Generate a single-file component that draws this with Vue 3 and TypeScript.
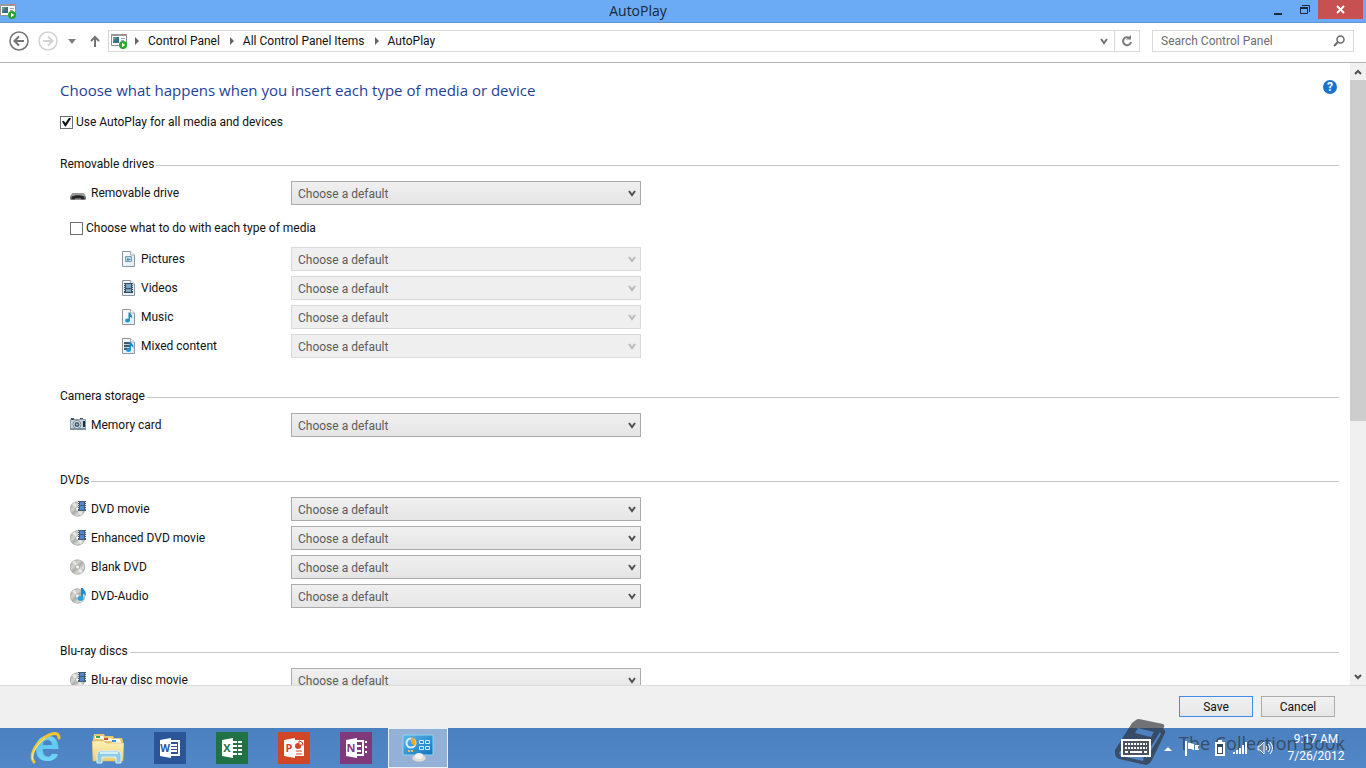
<script setup lang="ts">
import { ref, reactive } from 'vue'

interface MediaRow {
  id: string
  label: string
  icon: string
}

interface MediaGroup {
  title: string
  rows: MediaRow[]
  nested?: MediaRow[]
}

const groups: MediaGroup[] = [
  {
    title: 'Removable drives',
    rows: [{ id: 'removable', label: 'Removable drive', icon: 'drive' }],
    nested: [
      { id: 'pictures', label: 'Pictures', icon: 'picture' },
      { id: 'videos', label: 'Videos', icon: 'video' },
      { id: 'music', label: 'Music', icon: 'music' },
      { id: 'mixed', label: 'Mixed content', icon: 'mixed' },
    ],
  },
  { title: 'Camera storage', rows: [{ id: 'card', label: 'Memory card', icon: 'camera' }] },
  {
    title: 'DVDs',
    rows: [
      { id: 'dvd', label: 'DVD movie', icon: 'disc-film' },
      { id: 'edvd', label: 'Enhanced DVD movie', icon: 'disc-film' },
      { id: 'blank', label: 'Blank DVD', icon: 'disc' },
      { id: 'audio', label: 'DVD-Audio', icon: 'disc-note' },
    ],
  },
  {
    title: 'Blu-ray discs',
    rows: [{ id: 'bluray', label: 'Blu-ray disc movie', icon: 'disc-film' }],
  },
]

const crumbs = ['Control Panel', 'All Control Panel Items', 'AutoPlay']
const useAutoPlay = ref(true)
const perMedia = ref(false)
const search = ref('')
const choices = reactive<Record<string, string>>({})

const officeApps = [
  { name: 'Word', letter: 'W', cls: 'word' },
  { name: 'Excel', letter: 'X', cls: 'excel' },
  { name: 'PowerPoint', letter: 'P', cls: 'ppt' },
  { name: 'OneNote', letter: 'N', cls: 'onenote' },
]
</script>

<template>
  <div class="desktop">
    <svg class="defs" aria-hidden="true">
      <defs>
        <linearGradient id="g-disc" x1="0" y1="0" x2="1" y2="1">
          <stop offset="0" stop-color="#9c9c9c" />
          <stop offset=".35" stop-color="#d6d6d0" />
          <stop offset=".5" stop-color="#a9ada6" />
          <stop offset=".7" stop-color="#dcdcda" />
          <stop offset="1" stop-color="#828282" />
        </linearGradient>
        <linearGradient id="g-page" x1="0" y1="0" x2="1" y2="1">
          <stop offset="0" stop-color="#ffffff" />
          <stop offset="1" stop-color="#dcebf6" />
        </linearGradient>
        <linearGradient id="g-e" x1="0" y1="0" x2="0" y2="1">
          <stop offset="0" stop-color="#b5ecfc" />
          <stop offset=".5" stop-color="#5fc9f3" />
          <stop offset="1" stop-color="#7fe0fb" />
        </linearGradient>
        <linearGradient id="g-folder" x1="0" y1="0" x2="0" y2="1">
          <stop offset="0" stop-color="#fdf1b8" />
          <stop offset="1" stop-color="#efcf73" />
        </linearGradient>
        <linearGradient id="g-cp" x1="0" y1="0" x2="1" y2="1">
          <stop offset="0" stop-color="#5bb7ea" />
          <stop offset="1" stop-color="#1373bd" />
        </linearGradient>
        <symbol id="i-autoplay" viewBox="0 0 16 16">
          <path d="M.5 1.5h15v11H.5z" fill="#fff" stroke="#8f9396" />
          <path d="M0 1h16v2H0z" fill="#9a9b9d" />
          <path d="M10 1h2v1h-2zM13 1h2v1h-2z" fill="#d36b62" />
          <path d="M2 4h6v6H2z" fill="#3d6f83" />
          <path d="M2 4h4l-4 5z" fill="#649d91" />
          <path d="M10 5.5h4M10 7.5h3" stroke="#9ba4ab" />
          <circle cx="12" cy="12" r="4" fill="#28a52c" />
          <path d="M11 9.8v4.4l3.300-2.200z" fill="#fff" />
        </symbol>
        <symbol id="i-page" viewBox="0 0 16 16">
          <path d="M2.5 .5h8l4 3.500v11.500h-12z" fill="url(#g-page)" stroke="#8d969e" />
          <path d="M10.5 .5v3.500h4" fill="#fff" stroke="#a5adb4" />
        </symbol>
        <symbol id="i-picture" viewBox="2 0 16 16">
          <use href="#i-page" width="16" height="16" />
          <path d="M5.500 5.500h6v5h-6z" fill="#b8dcec" stroke="#7c9cac" />
          <path d="M7 7l4 1.500L7 10z" fill="#5591ae" />
        </symbol>
        <symbol id="i-video" viewBox="2 0 16 16">
          <use href="#i-page" width="16" height="16" />
          <path d="M4 3h9v10H4z" fill="#3a4d60" />
          <path d="M6 4h5v4H6zM6 9h5v3H6z" fill="#79a6c4" />
          <path d="M4 4h1v1H4zM4 6h1v1H4zM4 8h1v1H4zM4 10h1v1H4zM12 4h1v1h-1zM12 6h1v1h-1zM12 8h1v1h-1zM12 10h1v1h-1z" fill="#d3dce3" />
        </symbol>
        <symbol id="i-music" viewBox="2 0 16 16">
          <use href="#i-page" width="16" height="16" />
          <path d="M8.500 3.500H10c.5 2 3 2.500 2 6.500 0-1.500-1-2-2-2v4H8.500z" fill="#168bc8" />
          <ellipse cx="7.500" cy="11.500" rx="2.500" ry="2" fill="#1c99d4" />
        </symbol>
        <symbol id="i-mixed" viewBox="2 0 16 16">
          <use href="#i-page" width="16" height="16" />
          <path d="M4 4h7v8H4z" fill="#42596c" />
          <path d="M4 6.500h6M4 9.500h6" stroke="#b7d0e0" />
          <path d="M9.500 4H11c.5 2 3 2.500 2.500 6-.5-1-1.500-2-2.500-2v4H9.500z" fill="#168bc8" />
          <ellipse cx="8.500" cy="12" rx="2.500" ry="2" fill="#1c99d4" />
        </symbol>
        <symbol id="i-drive" viewBox="0 0 16 16">
          <path d="M2.500 8h11l2.500 4v2l-1 1H1l-1-1v-2z" fill="#777" />
          <path d="M2.500 8h11l2 3H.5z" fill="#999" />
          <path d="M2 12c1-2.500 11-2.500 12 0l.5 2h-13z" fill="#252525" />
          <path d="M5 14h6" stroke="#b4b4b4" />
        </symbol>
        <symbol id="i-camera" viewBox="0 0 16 16">
          <path d="M.5 2.500h15v10H.5z" fill="#c7d3dd" stroke="#8b9caa" />
          <path d="M0 11h16v2H0z" fill="#7f92a3" />
          <path d="M1 1h3v2H1zM10 1h3v1h-3z" fill="#42515e" />
          <path d="M13 4h2v6h-2z" fill="#1f2c37" />
          <circle cx="7" cy="7.500" r="4" fill="#eef4f8" stroke="#718494" />
          <circle cx="7" cy="7.500" r="2.500" fill="#3c5870" />
          <circle cx="7" cy="7.500" r="1" fill="#a4cbe0" />
        </symbol>
        <symbol id="i-disc" viewBox="0 0 16 16">
          <circle cx="7.500" cy="8" r="7.300" fill="url(#g-disc)" stroke="#989898" stroke-width=".6" />
          <path d="M7.500 8L2 3.500A7 7 0 0 1 5 1.500zM7.500 8l5.500 4.500a7 7 0 0 1-3 2z" fill="#f5f5f3" opacity=".7" />
          <circle cx="7.500" cy="8" r="2.200" fill="#e0e0e0" stroke="#a0a0a0" stroke-width=".6" />
          <circle cx="7.500" cy="8" r="1" fill="#fff" />
        </symbol>
        <symbol id="i-disc-film" viewBox="0 0 16 16">
          <use href="#i-disc" width="16" height="16" />
          <path d="M8 0h8v10H8z" fill="#465a72" />
          <path d="M10 1h4v3h-4zM10 5h4v4h-4z" fill="#4f86cf" />
          <path d="M8 1h1v1H8zM8 3h1v1H8zM8 5h1v1H8zM8 7h1v1H8zM15 1h1v1h-1zM15 3h1v1h-1zM15 5h1v1h-1zM15 7h1v1h-1z" fill="#dbe2e8" />
        </symbol>
        <symbol id="i-disc-note" viewBox="0 0 16 16">
          <use href="#i-disc" width="16" height="16" />
          <path d="M11 0h2c.5 2 4 3.500 2.500 8-.6-1.500-1.500-2.500-2.500-2.500V11h-2z" fill="#178ed0" />
          <ellipse cx="10.500" cy="10.500" rx="3" ry="2.400" fill="#28a3e0" />
        </symbol>
      </defs>
    </svg>

    <header class="titlebar">
      <svg class="icon16" aria-hidden="true"><use href="#i-autoplay" /></svg>
      <h1 class="title">AutoPlay</h1>
      <div class="controls">
        <button class="ctl min" aria-label="Minimize">
          <svg width="10" height="14"><path d="M1 11h8" stroke="#1b2a3a" stroke-width="2" /></svg>
        </button>
        <button class="ctl restore" aria-label="Restore">
          <svg width="12" height="12">
            <path d="M3 1.500h7.500V8" fill="none" stroke="#1b2a3a" />
            <path d="M1.500 4.500h7v5h-7z" fill="none" stroke="#1b2a3a" />
            <path d="M1 4h8" stroke="#1b2a3a" stroke-width="2" />
          </svg>
        </button>
        <button class="ctl close" aria-label="Close">
          <svg width="9" height="9"><path d="M1 1l7 7M8 1l-7 7" stroke="#fff" stroke-width="2" /></svg>
        </button>
      </div>
    </header>

    <nav class="navbar" aria-label="Navigation">
      <button class="nav back" aria-label="Back">
        <svg width="20" height="20">
          <circle cx="10" cy="10" r="9" fill="none" stroke="#747474" stroke-width="1.500" />
          <path d="M15 10H6M10 5.500L5.500 10l4.500 4.500" fill="none" stroke="#747474" stroke-width="2" />
        </svg>
      </button>
      <button class="nav forward" aria-label="Forward">
        <svg width="20" height="20">
          <circle cx="10" cy="10" r="9" fill="none" stroke="#d2d2d2" stroke-width="1.500" />
          <path d="M5 10h9M10 5.500l4.500 4.500-4.500 4.500" fill="none" stroke="#d2d2d2" stroke-width="2" />
        </svg>
      </button>
      <button class="nav recent" aria-label="Recent locations">
        <svg width="8" height="5"><path d="M0 0h8L4 5z" fill="#808080" /></svg>
      </button>
      <button class="nav up" aria-label="Up">
        <svg width="10" height="12"><path d="M5 12V2M1 6l4-4 4 4" fill="none" stroke="#747474" stroke-width="2" /></svg>
      </button>
      <div class="address">
        <svg class="icon16" aria-hidden="true"><use href="#i-autoplay" /></svg>
        <ol class="crumbs">
          <li v-for="c in crumbs" :key="c">
            <svg width="4" height="8" aria-hidden="true"><path d="M0 0l4 4-4 4z" fill="#666" /></svg>
            <a href="#">{{ c }}</a>
          </li>
        </ol>
        <button class="drop" aria-label="Previous locations">
          <svg width="8" height="7"><path d="M1 1l3 4 3-4" fill="none" stroke="#707070" stroke-width="2" /></svg>
        </button>
        <button class="refresh" aria-label="Refresh">
          <svg width="12" height="12">
            <path d="M8.500 3A4 4 0 1 0 10 7" fill="none" stroke="#7c7c7c" stroke-width="2" />
            <path d="M5 4.500h5V0z" fill="#7c7c7c" />
          </svg>
        </button>
      </div>
      <label class="search">
        <input v-model="search" type="text" placeholder="Search Control Panel" aria-label="Search Control Panel" />
        <svg width="12" height="12" aria-hidden="true">
          <circle cx="7.500" cy="4.500" r="3.500" fill="none" stroke="#6a6a6a" stroke-width="1.500" />
          <path d="M5 7l-4 4" stroke="#6a6a6a" stroke-width="2" />
        </svg>
      </label>
    </nav>

    <div class="body">
      <main class="content">
        <div class="head">
          <h2>Choose what happens when you insert each type of media or device</h2>
          <button class="help" aria-label="Help">?</button>
        </div>
        <label class="check">
          <input v-model="useAutoPlay" type="checkbox" />
          <span>Use AutoPlay for all media and devices</span>
        </label>

        <section v-for="g in groups" :key="g.title" class="group" :class="{ compact: g.nested }">
          <h3><span>{{ g.title }}</span></h3>
          <div class="rows">
            <div v-for="r in g.rows" :key="r.id" class="row">
              <svg class="icon16" aria-hidden="true"><use :href="'#i-' + r.icon" /></svg>
              <label :for="r.id">{{ r.label }}</label>
              <div class="select">
                <select :id="r.id" v-model="choices[r.id]">
                  <option :value="undefined">Choose a default</option>
                </select>
                <svg width="8" height="7" aria-hidden="true"><path d="M1 1l3 4 3-4" fill="none" stroke="#505050" stroke-width="2" /></svg>
              </div>
            </div>
          </div>
          <template v-if="g.nested">
            <label class="check inner">
              <input v-model="perMedia" type="checkbox" />
              <span>Choose what to do with each type of media</span>
            </label>
            <div class="rows nested">
              <div v-for="r in g.nested" :key="r.id" class="row">
                <svg class="icon16" aria-hidden="true"><use :href="'#i-' + r.icon" /></svg>
                <label :for="r.id">{{ r.label }}</label>
                <div class="select">
                  <select :id="r.id" v-model="choices[r.id]" :disabled="!perMedia">
                    <option :value="undefined">Choose a default</option>
                  </select>
                  <svg width="8" height="7" aria-hidden="true"><path d="M1 1l3 4 3-4" fill="none" stroke="#b8b8b8" stroke-width="2" /></svg>
                </div>
              </div>
            </div>
          </template>
        </section>
      </main>
      <div class="scrollbar">
        <button aria-label="Scroll up">
          <svg width="8" height="6"><path d="M1 5l3-3 3 3" fill="none" stroke="#505050" stroke-width="2" /></svg>
        </button>
        <div class="track"><div class="thumb"></div></div>
        <button aria-label="Scroll down">
          <svg width="8" height="6"><path d="M1 1l3 3 3-3" fill="none" stroke="#505050" stroke-width="2" /></svg>
        </button>
      </div>
    </div>

    <footer class="actions">
      <button class="btn primary">Save</button>
      <button class="btn">Cancel</button>
    </footer>

    <div class="taskbar">
      <div class="apps">
        <button class="app" aria-label="Internet Explorer">
          <svg width="32" height="34" viewBox="0 0 32 34">
            <text x="17" y="30" class="ie">e</text>
            <path d="M4 31C-1 26 5 13 14 7c7-5 15-7 15 0" fill="none" stroke="#f2c52c" stroke-width="3" stroke-linecap="round" />
            <path d="M3 29c-3-5 4-16 12-22" fill="none" stroke="#fff0a0" stroke-width="1" />
          </svg>
        </button>
        <button class="app" aria-label="File Explorer">
          <svg width="32" height="32" viewBox="0 0 32 32">
            <path d="M1 7l1-5h10l1 2h8l1 2h8l1 3v19H1z" fill="#e8c86c" />
            <path d="M3 4h8l2 3H3z" fill="#fbfbf2" />
            <path d="M10 6h9l2 3h-9z" fill="#fdfdf8" />
            <path d="M19 7h9l1 4h-9z" fill="#fdfdf8" />
            <path d="M4 4h4v2H4z" fill="#35a853" />
            <path d="M12 6h4v2h-4z" fill="#d8442d" />
            <path d="M20 8h4v2h-4z" fill="#348fd4" />
            <path d="M0 9h12l2 2h18l-1 18H1z" fill="url(#g-folder)" stroke="#d7b860" stroke-width=".6" />
            <path d="M5 31V22l2-3h20l2 3v9h-5v-6H10v6z" fill="#8fcbe7" stroke="#d8f2fc" />
            <path d="M8 21h18" stroke="#e7f8ff" stroke-width="1.500" />
          </svg>
        </button>
        <button v-for="a in officeApps" :key="a.name" class="app" :aria-label="a.name">
          <span class="tile" :class="a.cls">
            <svg width="32" height="32" viewBox="0 0 32 32">
              <path v-if="a.letter === 'W'" d="M17 9h8v14h-8M17 13h6M17 16h6M17 19h6" fill="none" stroke="#fff" stroke-width="2" />
              <path v-else-if="a.letter === 'X'" d="M17 10h4M22 10h4M17 14h4M22 14h4M17 18h4M22 18h4M17 22h4M22 22h4" stroke="#fff" stroke-width="2" />
              <g v-else-if="a.letter === 'P'">
                <path d="M17 8h9v16h-9" fill="#fff" />
                <path d="M18 19h6M18 22h6" stroke="#d24625" />
                <circle cx="20" cy="14" r="3" fill="#d24625" />
                <path d="M21 9v4h4a4 4 0 0 0-4-4z" fill="#fff" stroke="#d24625" />
              </g>
              <path v-else d="M17 9h6v14h-6M17 14h4M17 19h4M25 10h2M25 15h2M25 20h2" fill="none" stroke="#fff" stroke-width="2" />
              <path d="M6 8l11-2v20L6 24z" fill="#fff" />
              <text x="11" y="20" class="letter">{{ a.letter }}</text>
            </svg>
          </span>
        </button>
        <button class="app active" aria-label="Control Panel">
          <svg width="32" height="30" viewBox="0 0 32 30">
            <path d="M1 2h30v20H1z" fill="url(#g-cp)" stroke="#8fd3f5" />
            <circle cx="9" cy="10" r="4.500" fill="none" stroke="#d9f0fb" stroke-width="2" />
            <path d="M9 10V4a6 6 0 0 1 4 9z" fill="#f5a52c" />
            <path d="M17.500 7.500h4v3h-4zM23.500 7.500h4v3h-4zM17.500 13.500h4v3h-4zM23.500 13.500h4v3h-4z" fill="#2f86c9" stroke="#d5effb" />
            <path d="M6 18h2M9 18h2" stroke="#f7c04d" stroke-width="2" />
            <ellipse cx="17" cy="25" rx="7" ry="4" fill="#dcdcdc" stroke="#a9a9a9" stroke-width=".6" />
            <ellipse cx="17" cy="23" rx="4" ry="3" fill="#f2f2f2" />
          </svg>
        </button>
      </div>

      <div class="watermark" aria-hidden="true">
        <svg width="52" height="48" viewBox="0 0 52 48">
          <path
            fill-rule="evenodd"
            d="M21 1q1-1 3-1l24 5q2 1 1 3l-1 2q3 1 2 4L37 41q-2 4-6 5L4 40q-5-2-4-9L17 4zM23 9l-3 5 16 4 3-5zM45 13L32 34l-1 6 15-25zM5 32q-2 3 1 5l22 5 1-5z"
            fill="#2c3036"
          />
        </svg>
        <span>The Collection Book</span>
      </div>

      <div class="tray">
        <button class="keys" aria-label="Touch keyboard">
          <svg width="30" height="18">
            <path d="M1 1h28v16H1z" fill="#4b535e" stroke="#fff" stroke-width="2" />
            <path d="M4 5h22M4 9h22" stroke="#fff" stroke-width="2" stroke-dasharray="2 1" />
            <path d="M4 13h3M9 13h12M23 13h3" stroke="#fff" stroke-width="2" />
          </svg>
        </button>
        <button class="more" aria-label="Show hidden icons">
          <svg width="8" height="5"><path d="M0 5l4-4 4 4z" fill="#fff" /></svg>
        </button>
        <button class="flag" aria-label="Action Center">
          <svg width="16" height="16">
            <path d="M2 1v15" stroke="#fff" stroke-width="2" />
            <path d="M4 3c3-1 4 1 6 1v6c-2 0-3-2-6-1zM11 5h4l-1 2 1 3h-4z" fill="#fff" />
          </svg>
        </button>
        <button class="battery" aria-label="Battery">
          <svg width="10" height="16">
            <path d="M3 0h4v2H3z" fill="#fff" />
            <path d="M1 3h8v12H1z" fill="#33485e" stroke="#fff" stroke-width="2" />
            <path d="M3 7h4v6H3z" fill="#fff" />
          </svg>
        </button>
        <button class="signal" aria-label="Network">
          <svg width="16" height="12"><path d="M1 10v2M4 8v4M7 6v6M10 3v9M13 0v12" stroke="#fff" stroke-width="2" /></svg>
        </button>
        <button class="volume" aria-label="Volume">
          <svg width="16" height="14">
            <path d="M1 5h2l4-4v12L3 9H1z" fill="#71869e" stroke="#fff" />
            <path d="M9 5q2 2 0 4M11 3q4 4 0 8M13 1q5 6 0 12" fill="none" stroke="#fff" />
          </svg>
        </button>
        <time class="clock"><span>9:17 AM</span><span>7/26/2012</span></time>
      </div>
    </div>
  </div>
</template>

<style>
body {
  margin: 0;
}
</style>

<style scoped>
.desktop {
  display: flex;
  flex-direction: column;
  height: 100vh;
  background: #fff;
  color: #111;
  font: 12px/16px Roboto, "Open Sans", sans-serif;
  overflow: hidden;
}
.defs {
  position: absolute;
  width: 0;
  height: 0;
}
button {
  padding: 0;
  border: 0;
  background: none;
  color: inherit;
  font: inherit;
}
svg {
  display: block;
  flex: none;
}
.icon16 {
  width: 16px;
  height: 16px;
}

.titlebar {
  display: flex;
  align-items: center;
  height: 23px;
  flex: none;
  box-sizing: border-box;
  background: #6babf5;
  border-bottom: 1px solid #5e96d6;
}
.title {
  flex: 1;
  margin: 0;
  text-align: center;
  font: 400 14px/20px "Open Sans", sans-serif;
  color: #17273b;
}
.controls {
  display: flex;
  align-self: flex-start;
  padding-right: 3px;
}
.ctl {
  display: flex;
  align-items: center;
  justify-content: center;
  height: 19px;
}
.min {
  width: 36px;
}
.restore {
  width: 18px;
}
.close {
  width: 45px;
  margin-left: 4px;
  background: #c75050;
}

.navbar {
  display: flex;
  align-items: center;
  flex: none;
  height: 40px;
  box-sizing: border-box;
  padding: 0 12px 3px 9px;
  border-bottom: 1px solid #b4b4b4;
}
.forward {
  margin-left: 9px;
}
.recent {
  margin-left: 10px;
}
.up {
  margin-left: 14px;
}
.address {
  display: flex;
  align-items: center;
  flex: 1;
  height: 22px;
  margin-left: 8px;
  padding-left: 2px;
  box-sizing: border-box;
  border: 1px solid #d9d9d9;
}
.crumbs {
  display: flex;
  flex: 1;
  gap: 10px;
  margin: 0;
  padding: 0 0 0 8px;
  list-style: none;
}
.crumbs li {
  display: flex;
  align-items: center;
  gap: 9px;
}
.crumbs a {
  color: #111;
  text-decoration: none;
}
.drop {
  width: 18px;
  padding-left: 4px;
}
.refresh {
  display: flex;
  align-items: center;
  justify-content: center;
  width: 25px;
  height: 20px;
  border-left: 1px solid #d9d9d9;
}
.search {
  display: flex;
  align-items: center;
  width: 202px;
  height: 22px;
  margin-left: 12px;
  padding: 0 8px;
  box-sizing: border-box;
  border: 1px solid #d9d9d9;
}
.search input {
  flex: 1;
  min-width: 0;
  padding: 0;
  border: 0;
  outline: 0;
  background: none;
  font: inherit;
}
.search input::placeholder {
  color: #6d6d6d;
  opacity: 1;
}

.body {
  display: flex;
  flex: 1;
  min-height: 0;
}
.content {
  flex: 1;
  padding: 15px 11px 0 60px;
  overflow: hidden;
}
.head {
  display: flex;
  justify-content: space-between;
  align-items: flex-start;
}
h2 {
  margin: 0;
  color: #1f3f98;
  font: 400 15px/24px "Open Sans", sans-serif;
}
.help {
  width: 14px;
  height: 14px;
  margin: 2px 2px 0 0;
  border-radius: 50%;
  background: #1874cd;
  color: #fff;
  font-weight: 700;
  line-height: 14px;
}
.check {
  display: flex;
  align-items: center;
  width: max-content;
  gap: 3px;
  margin-top: 12px;
}
.check input {
  appearance: none;
  width: 13px;
  height: 13px;
  margin: 0;
  border: 1px solid #707070;
  background: #fff;
}
.check input:checked::before {
  content: "";
  display: block;
  width: 9px;
  height: 9px;
  margin: 1px;
  background: #111;
  clip-path: polygon(0 45%, 20% 35%, 38% 62%, 80% 0, 100% 10%, 42% 100%, 34% 100%);
}
.group {
  margin-top: 34px;
}
.check + .group {
  margin-top: 25px;
}
.compact + .group {
  margin-top: 29px;
}
h3 {
  display: flex;
  align-items: center;
  gap: 2px;
  margin: 0;
  font-size: 12px;
  font-weight: 400;
  line-height: 18px;
}
h3::after {
  content: "";
  flex: 1;
  height: 1px;
  margin-top: 2px;
  background: #c6c6c6;
}
.rows {
  display: grid;
  gap: 5px;
  margin: 8px 0 0 10px;
}
.row {
  display: grid;
  grid-template-columns: 16px 195px 350px;
  column-gap: 5px;
  align-items: center;
}
.inner {
  margin: 15px 0 0 10px;
}
.nested {
  margin: 11px 0 0 60px;
}
.nested .row {
  grid-template-columns: 16px 145px 350px;
}
.nested .icon16 {
  margin-left: 2px;
}
.select {
  display: flex;
  align-items: center;
}
.select select {
  appearance: none;
  width: 100%;
  height: 24px;
  padding: 2px 24px 0 6px;
  border: 1px solid #acacac;
  border-radius: 0;
  background: linear-gradient(#f0f0f0, #e5e5e5);
  color: #5c5c5c;
  font: inherit;
}
.select select:disabled {
  border-color: #d9d9d9;
  background: #efefef;
  color: #5c5c5c;
  opacity: 1;
}
.select svg {
  margin: 1px 0 0 -13px;
  pointer-events: none;
}

.scrollbar {
  display: flex;
  flex-direction: column;
  width: 16px;
  background: #f0f0f0;
}
.scrollbar button {
  display: flex;
  align-items: center;
  justify-content: center;
  height: 17px;
}
.track {
  flex: 1;
}
.thumb {
  height: 58%;
  background: #cdcdcd;
}

.actions {
  display: flex;
  justify-content: flex-end;
  gap: 8px;
  flex: none;
  box-sizing: border-box;
  height: 43px;
  padding: 10px 31px 0;
  background: #f0f0f0;
  border-top: 1px solid #dcdcdc;
}
.btn {
  width: 74px;
  height: 21px;
  border: 1px solid #acacac;
  background: linear-gradient(#f1f1f1, #e6e6e6);
  line-height: 18px;
}
.btn.primary {
  border-color: #3f8fe8;
}

.taskbar {
  display: flex;
  justify-content: space-between;
  position: relative;
  flex: none;
  height: 40px;
  background: linear-gradient(#4a80c0, #5288c7);
}
.apps {
  display: flex;
  gap: 2px;
  padding-left: 16px;
}
.app {
  display: flex;
  align-items: center;
  justify-content: center;
  width: 60px;
  height: 40px;
  box-sizing: border-box;
}
.app.active {
  border: 1px solid #e8f0f8;
  background: #93b1d6;
}
.ie {
  fill: url(#g-e);
  font: 700 46px "Liberation Sans", sans-serif;
  text-anchor: middle;
}
.tile {
  display: block;
}
.letter {
  font: 700 11px "Open Sans", sans-serif;
  text-anchor: middle;
}
.word {
  background: #2a5699;
}
.word .letter {
  fill: #2a5699;
  font-size: 10px;
}
.excel {
  background: #207245;
}
.excel .letter {
  fill: #207245;
}
.ppt {
  background: #d24625;
}
.ppt .letter {
  fill: #d24625;
}
.onenote {
  background: #80397b;
}
.onenote .letter {
  fill: #80397b;
}
.watermark {
  display: flex;
  align-items: center;
  gap: 12px;
  position: absolute;
  right: 21px;
  bottom: 1px;
  color: #2c3036;
  font: 18px/48px "Open Sans", sans-serif;
  opacity: 0.65;
}
.tray {
  display: flex;
  align-items: center;
  position: relative;
  padding-right: 21px;
  color: #fff;
}
.more {
  margin-left: 13px;
}
.flag {
  margin-left: 12px;
}
.battery {
  margin-left: 15px;
}
.signal {
  margin-left: 8px;
}
.volume {
  margin-left: 8px;
}
.clock {
  display: flex;
  flex-direction: column;
  align-items: center;
  width: 58px;
  margin-left: 14px;
  line-height: 17px;
}
</style>
